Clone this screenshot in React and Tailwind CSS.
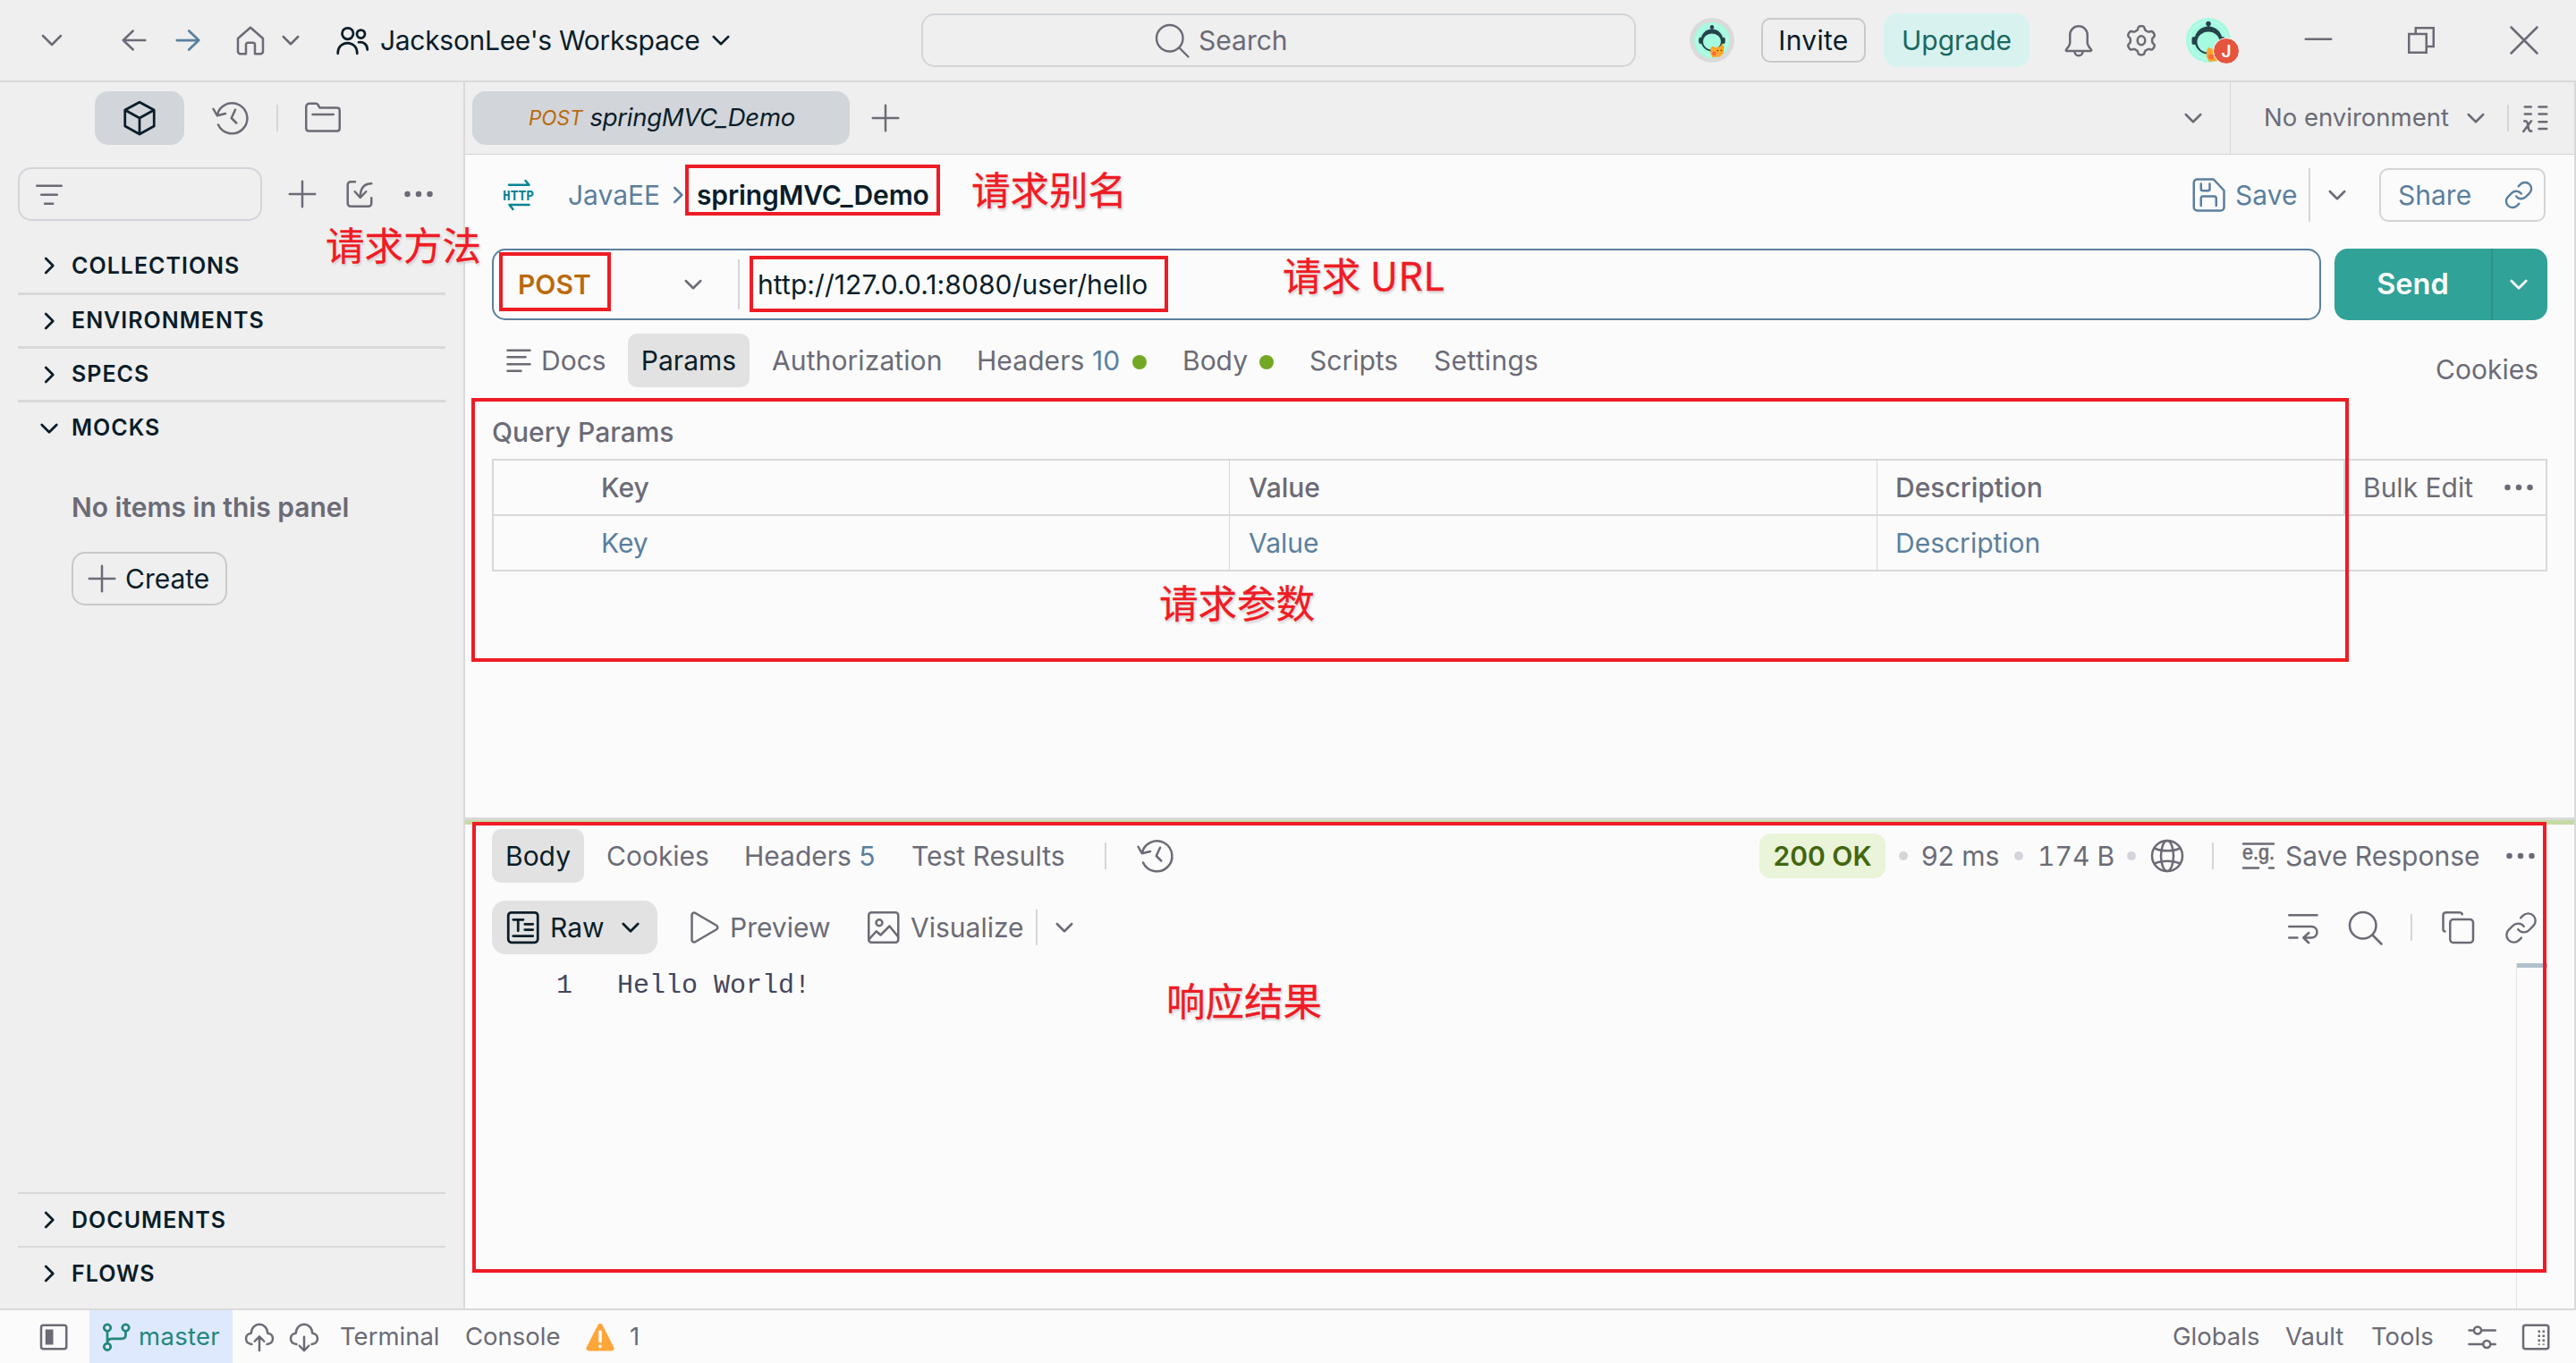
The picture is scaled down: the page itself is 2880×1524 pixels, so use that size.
import React from "react";
import { Link } from "lucide-react";

const GRAY = "#6b6b76";
const DARK = "#0a1d29";
const BLUE = "#5b7f9d";

function Icon({ children, className = "", color = GRAY, sw = 1 }) {
  return (
    <svg viewBox="0 0 16 16" className={"size-10 shrink-0 overflow-visible " + className} fill="none" stroke={color} strokeWidth={sw} strokeLinecap="round" strokeLinejoin="round">
      {children}
    </svg>
  );
}

const Chevron = (p) => (
  <Icon {...p}>
    <path d="M4.7 6.4L8 9.7l3.3-3.3" />
  </Icon>
);
const ChevronRight = (p) => (
  <Icon {...p}>
    <path d="M6.5 4.8L9.7 8l-3.2 3.2" />
  </Icon>
);
const Plus = (p) => (
  <Icon {...p}>
    <path d="M8 2.3v11.4M2.3 8h11.4" />
  </Icon>
);
const Dots = (p) => (
  <Icon {...p}>
    <g fill={GRAY} stroke="none">
      <circle cx="3" cy="8" r="1.3" />
      <circle cx="8" cy="8" r="1.3" />
      <circle cx="13" cy="8" r="1.3" />
    </g>
  </Icon>
);
const History = (p) => (
  <Icon {...p}>
    <path d="M2.8 11A6.8 6.8 0 1 0 2.3 6.7M.6 3.9l1.7 3L6 6M10.4 4.3L8.7 8l2.2 2.2" />
  </Icon>
);
const SearchIcon = (p) => (
  <Icon {...p}>
    <circle cx="7.1" cy="7.1" r="5.9" />
    <path d="M11.4 11.4l4 4" />
  </Icon>
);
const Divider = ({ className }) => <div className={"shrink-0 bg-[#d4d6da] " + className} />;

const gearPath = (() => {
  const pts = [];
  for (let i = 0; i < 120; i++) {
    const a = (i / 120) * Math.PI * 2;
    const r = 5.65 + 0.8 * Math.tanh(2.2 * Math.cos(6 * a));
    pts.push((8 + r * Math.sin(a)).toFixed(2) + " " + (8.1 - r * Math.cos(a)).toFixed(2));
  }
  return "M" + pts.join("L") + "Z";
})();

function Robot({ className }) {
  return (
    <svg viewBox="0 0 50 50" className={className}>
      <circle cx="25" cy="25" r="25" fill="#a5fbe0" />
      <circle cx="25" cy="25" r="21" fill="none" stroke="#d3fdf0" strokeWidth="1" />
      <path d="M25 13V7" stroke="#26424a" strokeWidth="2.4" />
      <circle cx="25" cy="6.5" r="2.8" fill="#26424a" />
      <circle cx="25" cy="25" r="15.5" fill="#26424a" />
      <rect x="6.500" y="21" width="5" height="9" rx="2.5" fill="#26424a" />
      <rect x="38.500" y="21" width="5" height="9" rx="2.500" fill="#26424a" />
      <ellipse cx="25" cy="27" rx="12.500" ry="11.500" fill="#a5fbe0" />
      <path d="M23 37l2-4 5 2 6-1 4-5 2 6-1 8-5 5-10 1-3-5z" fill="#fca62b" />
      <circle cx="28" cy="43.500" r="3" fill="#ff6a3d" />
      <circle cx="33" cy="39.500" r="1" fill="#3b2a1a" />
      <circle cx="38" cy="39" r="1" fill="#3b2a1a" />
    </svg>
  );
}

function Header() {
  return (
    <header className="flex h-[92px] shrink-0 items-center border-b-2 border-[#d9d9d9] text-[30px] leading-none text-[#6b6b76]">
      <Icon className="ml-[38px]">
        <path d="M4 6l4 4 4-4" />
      </Icon>
      <Icon className="ml-[52px]">
        <path d="M12.9 8H3.1M7.5 3.8L3.1 8l4.400 4.200" />
      </Icon>
      <Icon className="ml-5" color={BLUE} sw={1.1}>
        <path d="M3.100 8h9.800M8.500 3.800L12.900 8l-4.400 4.200" />
      </Icon>
      <Icon className="ml-[30px]">
        <path d="M2.400 7.200L8 2.300l5.600 4.900V13a1.100 1.100 0 0 1-1.100 1.100H10V10a.9.9 0 0 0-.9-.9H6.900A.9.9 0 0 0 6 10v4.100H3.500A1.100 1.100 0 0 1 2.400 13z" />
      </Icon>
      <Chevron className="ml-[5px]" />
      <Icon className="ml-[29px]" color={DARK} sw={1.100}>
        <circle cx="5.900" cy="5" r="2.500" />
        <circle cx="11.800" cy="5.200" r="1.800" />
        <path d="M1.500 13.900v-.4a4.300 4.300 0 0 1 8.600 0v.4M10.800 8.900c2.100-.4 3.900 1 3.900 3.300" />
      </Icon>
      <span className="ml-[11px] w-[357px] whitespace-nowrap tracking-[-0.3px] text-[#0a1d29]">JacksonLee's Workspace</span>
      <Chevron className="ml-1" color={DARK} />
      <div className="ml-[204px] flex h-[60px] w-[799px] items-center rounded-[15px] border-2 border-[#d2d5d9]">
        <SearchIcon className="ml-[258px]" sw={0.950} />
        <span className="ml-[10px]">Search</span>
      </div>
      <div className="ml-[60px] flex size-[50px] items-center justify-center rounded-full bg-[#dadada]">
        <Robot className="size-10" />
      </div>
      <button className="ml-[30px] h-[50px] w-[117px] rounded-[10px] border-2 border-[#c9c9c9] tracking-[0.300px] text-[#0a1d29]">Invite</button>
      <button className="ml-5 h-[60px] w-[163px] rounded-[15px] bg-[#d8f3ef] text-[#1b6760]">Upgrade</button>
      <Icon className="ml-[35px]">
        <path d="M8 1.700a3.900 3.900 0 0 0-3.900 3.900V9c0 1.200-.9 2.300-1.700 3.200-.2.300 0 .6.200.6h10.800c.2 0 .4-.3.200-.6-.8-.9-1.700-2-1.700-3.200V5.600A3.900 3.900 0 0 0 8 1.700zM6.200 13.100a1.800 1.800 0 0 0 3.600 0" />
      </Icon>
      <Icon className="ml-[30px]">
        <path d={gearPath} />
        <ellipse cx="8" cy="8.100" rx="1.700" ry="2" />
      </Icon>
      <div className="relative ml-[30px] size-[50px]">
        <Robot className="size-[50px]" />
        <span className="absolute top-[22px] left-[30px] flex size-[30px] items-center justify-center rounded-full border border-white bg-[#e4553f] text-[19px] font-semibold text-white">J</span>
      </div>
      <Icon className="ml-[78px]">
        <path d="M2.300 7.500h11.400" />
      </Icon>
      <Icon className="ml-[75px]">
        <path d="M2.500 5.200h7.800v8.300H2.500zM5.500 5V2.500h8v8.300h-3" strokeLinejoin="miter" />
      </Icon>
      <Icon className="ml-[75px]">
        <path d="M2.200 2.200l11.600 11.600M13.800 2.200L2.200 13.800" />
      </Icon>
    </header>
  );
}

function Section({ label, open, className = "" }) {
  return (
    <div className={"flex shrink-0 items-center border-[#d9d9d9] " + className}>
      {open ? <Chevron className="ml-[15px]" color={DARK} sw={1.100} /> : <ChevronRight className="ml-[15px]" color={DARK} sw={1.100} />}
      <span className="ml-[5px] text-[25px] leading-none font-semibold tracking-[1px] text-[#0a1d29]">{label}</span>
    </div>
  );
}

function Sidebar() {
  return (
    <aside className="flex w-[520px] shrink-0 flex-col border-r-2 border-[#d9d9d9] bg-[#efefef]">
      <div className="flex h-20 shrink-0 items-center">
        <div className="ml-[106px] flex h-[60px] w-[100px] items-center justify-center rounded-[15px] bg-[#d2d5da]">
          <Icon color={DARK} sw={1.100}>
            <path d="M8 .9l6.500 3.500v7.200L8 15.200l-6.500-3.600V4.400zM1.500 4.400L8 8l6.500-3.600M8 8v7.200" />
          </Icon>
        </div>
        <History className="ml-[31px]" />
        <Divider className="ml-8 h-[30px] w-[2px]" />
        <Icon className="ml-[30px]">
          <path d="M.5 3a1.500 1.500 0 0 1 1.500-1.500h2.800c.5 0 .8.200 1 .6l.8 1.300h7.700c.8 0 1.200.5 1.200 1.200v8c0 .8-.5 1.200-1.200 1.200H1.800C1 13.800.5 13.400.5 12.600zM3.400 6.400h9.300" />
        </Icon>
      </div>
      <div className="mt-[15px] flex h-[60px] shrink-0 items-center">
        <div className="ml-5 flex h-[60px] w-[273px] items-center rounded-[15px] border-2 border-[#d2d5da]">
          <Icon className="ml-[13px]">
            <path d="M2.500 4.300h11M4.500 8.300h7M6 12.300h3.700" />
          </Icon>
        </div>
        <Plus className="ml-[25px]" />
        <Icon className="ml-6">
          <path d="M6 2.500H4a1.300 1.300 0 0 0-1.300 1.300v8.400A1.300 1.300 0 0 0 4 13.500h8a1.300 1.300 0 0 0 1.300-1.300V9.700M13.300 3.300C10.200 3.300 8.300 5.300 8.300 9.400M5.900 6.900l2.400 2.700L10.900 6.900" />
        </Icon>
        <Dots className="ml-[26px]" />
      </div>
      <div className="mt-5 flex flex-1 flex-col pr-5 pl-5">
        <Section label="COLLECTIONS" className="h-[63px] border-b-[3px]" />
        <Section label="ENVIRONMENTS" className="h-[60px] border-b-[3px]" />
        <Section label="SPECS" className="h-[60px] border-b-[3px]" />
        <Section label="MOCKS" open className="h-[57px]" />
        <div className="flex-1 pl-[60px]">
          <p className="mt-[45px] text-[30px] leading-[30px] font-semibold whitespace-nowrap text-[#6b6b76]">No items in this panel</p>
          <button className="mt-[35px] flex h-[60px] w-[174px] items-center rounded-[15px] border-2 border-[#c9c9c9] text-[30px] text-[#0a1d29]">
            <Plus className="ml-3" />
            <span className="ml-[6px]">Create</span>
          </button>
        </div>
        <Section label="DOCUMENTS" className="h-[60px] border-t-2" />
        <Section label="FLOWS" className="mb-2.5 h-[60px] border-t-2" />
      </div>
    </aside>
  );
}

function TabBar() {
  return (
    <div className="flex h-[81px] shrink-0 items-center border-b border-[#d2d5da] bg-[#efefef] text-[27.500px] leading-none text-[#6b6b76]">
      <div className="ml-2 flex h-[60px] w-[422px] items-center rounded-[15px] bg-[#d2d5da] italic">
        <span className="ml-[63px] text-[22.500px] text-[#b96a0c]">POST</span>
        <span className="ml-2 tracking-[-0.300px] text-[#0a1d29]">springMVC_Demo</span>
      </div>
      <Plus className="ml-5" />
      <Chevron className="ml-auto" />
      <div className="ml-[21px] flex h-20 w-[385px] items-center border-l border-[#d2d5da]">
        <span className="ml-[37px] w-[207px] whitespace-nowrap">No environment</span>
        <Chevron className="ml-[10px]" />
        <Divider className="ml-[15px] h-[30px] w-[2px]" />
        <Icon className="ml-[9px]">
          <path d="M3.500 3h2.800M9.800 3h3.500M3.500 6.200h2.800M9.800 6.200h3.500M9.800 9.700h3.500M9.800 12.800h3.500M3.300 9.400c1.200-.3 1.500.6 1.700 2.200s.5 2.500 1.500 2.200M6.400 9.300L2.900 14" />
        </Icon>
      </div>
    </div>
  );
}

function RequestHeader() {
  return (
    <div className="flex h-[90px] shrink-0 items-center text-[30px] leading-none text-[#5b7f9d]">
      <svg viewBox="0 0 40 40" className="ml-10 size-10 shrink-0 overflow-visible" fill="none" stroke="#0a8395" strokeWidth="2.500" strokeLinecap="round" strokeLinejoin="round">
        <path d="M9 8.700h22.500L27.500 4M31.500 31H9.500l4 5" />
        <text x="2" y="25.500" fontSize="17" fontWeight="700" textLength="35" lengthAdjust="spacingAndGlyphs" fill="#0a8395" stroke="none" fontFamily="Liberation Mono, monospace">HTTP</text>
      </svg>
      <span className="ml-[35px] w-[103px]">JavaEE</span>
      <ChevronRight className="w-10" color={BLUE} />
      <span className="ml-px font-semibold tracking-[-0.120px] whitespace-nowrap text-[#0a1d29]">springMVC_Demo</span>
      <Icon className="ml-auto" color={BLUE}>
        <path d="M3 1h7.300L15 6v7.500A1.500 1.500 0 0 1 13.500 15H3a1.500 1.500 0 0 1-1.500-1.500v-11A1.500 1.500 0 0 1 3 1zM4.700 3v2.300c0 .5.300.8.800.8h2.300c.5 0 .8-.3.800-.8V3M4.700 12.800V9.500c0-.6.300-.9.900-.9h5c.6 0 .9.300.9.900v3.300" />
      </Icon>
      <span className="ml-[10px] w-[69px]">Save</span>
      <Divider className="ml-[13px] h-[60px] w-[2px]" />
      <Chevron className="ml-[10px]" />
      <div className="mr-[32px] ml-[27px] flex h-[60px] w-[186px] items-center rounded-[10px] border-2 border-[#d2d4d5]">
        <span className="ml-[19px]">Share</span>
        <Link className="mr-[11px] ml-auto" size={34} strokeWidth={1.700} />
      </div>
    </div>
  );
}

function UrlBar() {
  return (
    <div className="mt-[15px] flex h-20 shrink-0 items-center text-[30px] leading-none">
      <div className="ml-[30px] flex h-20 w-[2045px] items-center rounded-[15px] border-2 border-[#5b7f9d]">
        <span className="ml-[27px] w-[84px] font-semibold text-[#b96a0c]">POST</span>
        <Chevron className="ml-[92px]" />
        <Divider className="ml-[30px] h-[56px] w-[2px]" />
        <span className="ml-[20px] whitespace-nowrap tracking-[0.080px] text-[#0a1d29]">http://127.0.0.1:8080/user/hello</span>
      </div>
      <button className="ml-[15px] flex h-20 w-[238px] items-center rounded-[15px] bg-[#30a297] text-[32.500px] font-semibold text-white">
        <span className="w-[175px] text-center">Send</span>
        <span className="h-20 w-[2px] bg-[#2b938a]" />
        <Chevron className="ml-[9px]" color="#ffffff" sw={1.100} />
      </button>
    </div>
  );
}

function RequestTabs() {
  return (
    <div className="mt-[15px] flex h-[60px] shrink-0 items-center text-[30px] leading-none whitespace-nowrap text-[#6b6b76]">
      <Icon className="ml-10">
        <path d="M3 3.500h10M3 6.500h8M3 9.700h10M3 12.700h6" />
      </Icon>
      <span className="ml-[5px] w-[75px]">Docs</span>
      <div className="ml-[22px] flex h-[60px] w-[136px] items-center justify-center rounded-[10px] bg-[#e2e2e2] text-[#0a1d29]">Params</div>
      <span className="ml-[25px] w-[192px] tracking-[0.100px]">Authorization</span>
      <span className="ml-[37px] w-[163px] tracking-[0.080px]">
        Headers <span className="text-[#5b7f9d]">10</span>
      </span>
      <span className="mt-1 ml-[11px] size-4 rounded-full bg-[#74a824]" />
      <span className="ml-[40px] w-[74px]">Body</span>
      <span className="mt-1 ml-[12px] size-4 rounded-full bg-[#74a824]" />
      <span className="ml-[40px] w-[101px]">Scripts</span>
      <span className="ml-[38px] tracking-[0.300px]">Settings</span>
      <span className="mt-5 mr-[40px] ml-auto">Cookies</span>
    </div>
  );
}

function ParamsTable() {
  const cell = "flex items-center border-[#d9d9d9]";
  return (
    <div className="shrink-0 pl-[30px] text-[30px] leading-none text-[#6b6b76]">
      <div className="flex h-20 items-center pt-5 font-medium">Query Params</div>
      <div className="w-[2298px] border-2 border-[#d9d9d9]">
        <div className="flex h-[62px] border-b-2 border-[#d9d9d9] font-medium">
          <div className={cell + " w-[823px] border-r pl-[120px]"}>Key</div>
          <div className={cell + " w-[724px] border-r pl-[21px]"}>Value</div>
          <div className={cell + " w-[523px] border-r-2 pl-[20px]"}>Description</div>
          <div className={cell + " flex-1 pl-[20px] font-normal whitespace-nowrap"}>
            Bulk Edit
            <Dots className="mr-[10px] ml-auto" />
          </div>
        </div>
        <div className="flex h-[60px] text-[#5b7f9d]">
          <div className={cell + " w-[823px] border-r pl-[120px]"}>Key</div>
          <div className={cell + " w-[724px] border-r pl-[21px]"}>Value</div>
          <div className={cell + " flex-1 pl-[20px]"}>Description</div>
        </div>
      </div>
    </div>
  );
}

function Response() {
  return (
    <section className="flex flex-1 flex-col text-[30px] leading-none whitespace-nowrap text-[#6b6b76]">
      <div className="mt-[5px] flex h-[60px] shrink-0 items-center">
        <div className="ml-[30px] flex h-[60px] w-[103px] items-center justify-center rounded-[10px] bg-[#e2e2e2] text-[#0a1d29]">Body</div>
        <span className="ml-[25px] w-[116px]">Cookies</span>
        <span className="ml-[38px] w-[148px]">
          Headers <span className="text-[#5b7f9d]">5</span>
        </span>
        <span className="ml-[39px] w-[173px]">Test Results</span>
        <Divider className="ml-[43px] h-[30px] w-[2px]" />
        <History className="ml-[34px]" />
        <div className="ml-auto flex h-[50px] w-[141px] items-center justify-center rounded-[13px] bg-[#e9f4d8] font-semibold text-[#43660f]">200 OK</div>
        <span className="ml-[15px] size-[10px] rounded-full bg-[#d2d5da]" />
        <span className="ml-[15px] w-[91px]">92 ms</span>
        <span className="ml-[13px] size-[10px] rounded-full bg-[#d2d5da]" />
        <span className="ml-[16px] w-[85px] tabular-nums">174 B</span>
        <span className="ml-[15px] size-[10px] rounded-full bg-[#d2d5da]" />
        <Icon className="ml-[15px]">
          <circle cx="8" cy="8" r="6.800" />
          <ellipse cx="8" cy="8" rx="2.800" ry="6.800" />
          <path d="M2.300 4.600c3.200 1.500 8.200 1.500 11.400 0M2.300 11.400c3.200-1.500 8.200-1.500 11.400 0" />
        </Icon>
        <Divider className="ml-[30px] h-[30px] w-[2px]" />
        <svg viewBox="0 0 40 40" className="ml-[30px] size-10 shrink-0 overflow-visible" stroke={GRAY} strokeWidth="2.500" strokeLinecap="round">
          <path d="M3 6.500h34M3 33.500h17M32 33.500h5" />
          <text x="2" y="24" fontSize="23" textLength="36" lengthAdjust="spacingAndGlyphs" fill={GRAY} stroke={GRAY} strokeWidth="0.600" fontFamily="Liberation Sans, sans-serif">e.g.</text>
        </svg>
        <span className="ml-[10px] w-[218px]">Save Response</span>
        <Dots className="mr-[40px] ml-[25px]" />
      </div>
      <div className="mt-5 flex h-[60px] shrink-0 items-center">
        <div className="ml-[30px] flex h-[60px] w-[185px] items-center rounded-[15px] bg-[#e2e2e2] text-[#0a1d29]">
          <Icon className="ml-[15px]" color={DARK} sw={1.100}>
            <rect x="1.300" y="1.300" width="13.200" height="13.400" rx="1.400" />
            <path d="M3.500 4.500h4.500M5.700 4.500v5M8.700 6.500h3.600M8.700 9h3.600M3.500 11.800h8.800" />
          </Icon>
          <span className="ml-[10px] w-[61px]">Raw</span>
          <Chevron className="ml-[9px]" color={DARK} sw={1.100} />
        </div>
        <Icon className="ml-[33px]">
          <path d="M2.200 2.400c0-.8.900-1.300 1.600-.8l9.400 5.500c.7.400.7 1.400 0 1.800l-9.400 5.500c-.7.500-1.600 0-1.600-.8z" />
        </Icon>
        <span className="ml-[8px] w-[113px]">Preview</span>
        <Icon className="ml-[39px]">
          <rect x="1.300" y="1.300" width="13.200" height="13.400" rx="1.200" />
          <circle cx="6" cy="5.900" r="1.400" />
          <path d="M1.700 13l3-3.300 1.900 1.700 4-4 3.800 4.700" />
        </Icon>
        <span className="ml-[10px] w-[126px]">Visualize</span>
        <Divider className="ml-[14px] h-[40px] w-[2px]" />
        <Chevron className="ml-[10px]" />
        <Icon className="ml-auto">
          <path d="M1.700 2.500h12.500M1.700 7.600h9.800c3.600 0 3.600 5 0 5H8.500M10.500 10.400l-2.400 2.200 2.400 2.300M1.700 12.600h3.700" />
        </Icon>
        <SearchIcon className="ml-[29px]" />
        <Divider className="ml-[31px] h-[30px] w-[2px]" />
        <Icon className="ml-[31px]">
          <rect x="4.500" y="4.400" width="10.300" height="10.400" rx="1.400" />
          <path d="M2.200 9.800c-.5-.1-.8-.5-.8-1V2.600c0-.8.500-1.300 1.300-1.300h6c.6 0 1 .3 1.200.8" />
        </Icon>
        <Link className="mr-[40px] ml-[31px]" size={39} strokeWidth={1.500} />
      </div>
      <div className="mt-[10px] flex flex-1 justify-between font-['Liberation_Mono',monospace] text-[#45455a]">
        <div className="flex h-[50px] items-center">
          <span className="w-[120px] text-right">1</span>
          <span className="ml-[50px]">Hello World!</span>
        </div>
        <div className="mr-[30px] w-[35px] border-l border-[#e4e4e4]">
          <div className="h-[5px] bg-[#b0c1ca]" />
        </div>
      </div>
    </section>
  );
}

function StatusBar() {
  return (
    <footer className="flex h-[61px] shrink-0 items-center border-t-2 border-[#d9d9d9] bg-[#fbfbfb] text-[27.500px] leading-none whitespace-nowrap text-[#6b6b76]">
      <Icon className="ml-10">
        <rect x="2.400" y="2.700" width="11.300" height="10.600" rx="1" />
        <rect x="4.300" y="4.600" width="3.500" height="6.800" fill={GRAY} stroke="none" />
      </Icon>
      <div className="ml-[20px] flex h-[59px] w-[160px] items-center bg-[#dfe9fd] text-[#22877e]">
        <Icon className="ml-[10px]" color="#22877e" sw={1.100}>
          <circle cx="4" cy="3.800" r="1.500" />
          <circle cx="12.200" cy="3.800" r="1.500" />
          <circle cx="4" cy="12.300" r="1.500" />
          <path d="M4 5.500v5.200M12.200 5.500V7c0 1.100-.6 1.700-1.700 1.700H6C4.800 8.700 4 9.300 4 10.700" />
        </Icon>
        <span className="ml-[5px] tracking-[0.300px]">master</span>
      </div>
      <Icon className="ml-[10px]">
        <path d="M4.600 11.200C.9 10.700 1.500 6.500 4.300 6.300 4.500 1 11.500 1 11.700 6.300c2.800.2 3.400 4.400-.3 4.900M8 14V7.900M5.900 9.900L8 7.700l2.100 2.200" />
      </Icon>
      <Icon className="ml-[10px]">
        <path d="M4.600 11.200C.9 10.700 1.500 6.500 4.300 6.300 4.500 1 11.500 1 11.700 6.300c2.800.2 3.400 4.400-.3 4.900M8 7.900V14M5.900 11.900L8 14.100l2.100-2.200" />
      </Icon>
      <span className="ml-[20px] w-[111px]">Terminal</span>
      <span className="ml-[29px] w-[107px]">Console</span>
      <Icon className="ml-[24px]">
        <path d="M8 3.200L3 13h10z" fill="#ffa63b" stroke="#ffa63b" strokeWidth="2.400" />
        <path d="M8 5.600v4.300M8 12.100v.1" stroke="#fff" strokeWidth="1.400" />
      </Icon>
      <span className="ml-[13px]">1</span>
      <span className="ml-auto w-[97px]">Globals</span>
      <span className="ml-[29px] w-[66px]">Vault</span>
      <span className="ml-[30px] w-[70px]">Tools</span>
      <Icon className="ml-[34px]">
        <path d="M2.200 5h2.200M7.700 5h6.200M2.200 11.200h6.300M11.800 11.200h2.100" />
        <circle cx="6" cy="5" r="1.600" />
        <circle cx="10.100" cy="11.200" r="1.600" />
      </Icon>
      <Icon className="mr-[25px] ml-[20px]">
        <rect x="2.400" y="2.700" width="11.300" height="10.600" rx="1" />
        <path d="M9.500 5v6.500M11.500 5v6.500" strokeDasharray="1 1" strokeLinecap="butt" />
      </Icon>
    </footer>
  );
}

const note =
  "absolute whitespace-nowrap text-[43.500px] leading-[60px] text-[#ee1c25] font-['Noto_Sans_CJK_SC',sans-serif] [-webkit-text-stroke:0.4px_#ee1c25] [text-shadow:0_0_2px_#fff,0_0_3px_#fff,1px_2px_3px_#bbb]";
const frame = "absolute border-4 border-[#ee1c25]";

function Annotations() {
  return (
    <div className="pointer-events-none absolute inset-0">
      <div className={frame + " top-[184px] left-[766px] h-[57px] w-[285px]"} />
      <div className={frame + " top-[282px] left-[558px] h-[66px] w-[125px]"} />
      <div className={frame + " top-[286px] left-[838px] h-[63px] w-[468px]"} />
      <div className={frame + " top-[445px] left-[527px] h-[295px] w-[2099px]"} />
      <div className={frame + " top-[919px] left-[528px] h-[504px] w-[2319px]"} />
      <span className={note + " top-[181px] left-[1086px]"}>请求别名</span>
      <span className={note + " top-[243px] left-[364px]"}>请求方法</span>
      <span className={note + " top-[277px] left-[1434px] tracking-[0.300px]"}>请求 URL</span>
      <span className={note + " top-[643px] left-[1296px]"}>请求参数</span>
      <span className={note + " top-[1088px] left-[1304px]"}>响应结果</span>
    </div>
  );
}

export default function App() {
  return (
    <div className="relative flex h-[1524px] w-[2880px] flex-col overflow-hidden bg-[#efefef] font-[Inter,sans-serif]">
      <Header />
      <div className="flex min-h-0 flex-1">
        <Sidebar />
        <main className="flex min-w-0 flex-1 flex-col border-r-2 border-[#d9d9d9] bg-[#fbfbfb]">
          <TabBar />
          <RequestHeader />
          <UrlBar />
          <RequestTabs />
          <ParamsTable />
          <div className="mt-auto h-[3px] shrink-0 bg-[#d9d9d9]" />
          <div className="h-[5px] shrink-0 bg-[#c5dba5]" />
          <div className="flex h-[541px] shrink-0 flex-col">
            <Response />
          </div>
        </main>
      </div>
      <StatusBar />
      <Annotations />
    </div>
  );
}
